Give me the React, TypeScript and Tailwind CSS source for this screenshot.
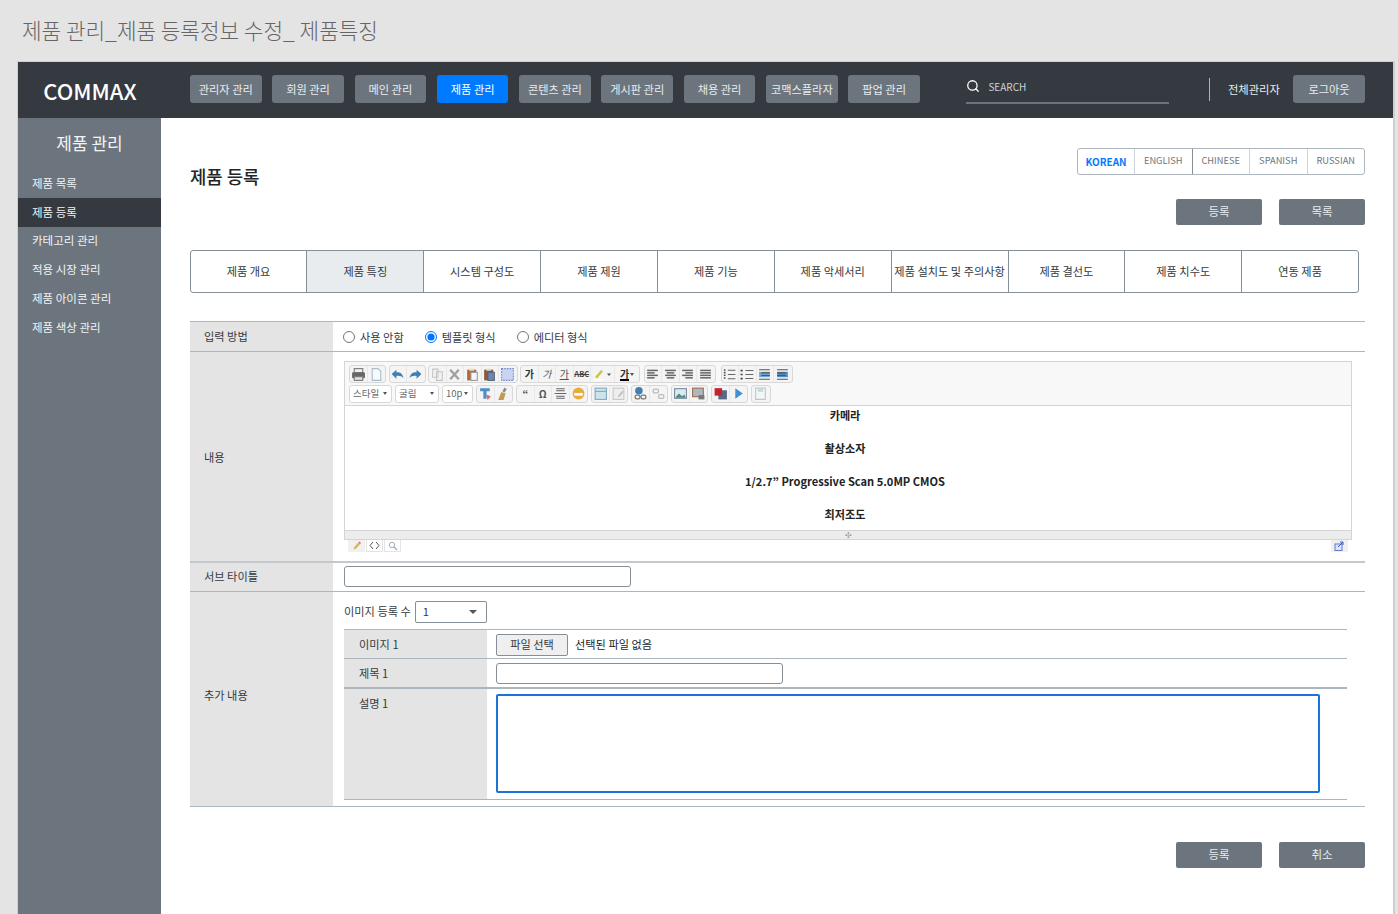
import React from 'react';
import { Search } from 'lucide-react';

const font = { fontFamily: '"Noto Sans CJK KR", "Noto Sans", sans-serif' };

const navItems = ['관리자 관리', '회원 관리', '메인 관리', '제품 관리', '콘텐츠 관리', '게시판 관리', '채용 관리', '코맥스플라자', '팝업 관리'];
const sideItems = ['제품 목록', '제품 등록', '카테고리 관리', '적용 시장 관리', '제품 아이콘 관리', '제품 색상 관리'];
const tabs = ['제품 개요', '제품 특징', '시스템 구성도', '제품 제원', '제품 기능', '제품 악세서리', '제품 설치도 및 주의사항', '제품 결선도', '제품 치수도', '연동 제품'];
const langs = ['KOREAN', 'ENGLISH', 'CHINESE', 'SPANISH', 'RUSSIAN'];

const Group = ({ children, className = '' }: { children: React.ReactNode; className?: string }) => (
  <div className={`flex h-[18px] shrink-0 items-center rounded-[3px] border border-[#d8d8d8] bg-[#f4f4f4] ${className}`}>{children}</div>
);

const Tool = ({ children, wide }: { children: React.ReactNode; wide?: boolean }) => (
  <div className={`flex h-full items-center justify-center border-r border-[#e8e8e8] last:border-r-0 ${wide ? 'w-[24px]' : 'w-[17.5px]'}`}>{children}</div>
);

const Ico = ({ children }: { children: React.ReactNode }) => (
  <svg width="15" height="15" viewBox="0 0 14 14" fill="none">{children}</svg>
);

const Lines = ({ rows }: { rows: [number, number][] }) => (
  <Ico>
    {rows.map(([x, w], i) => (
      <rect key={i} x={x} y={2.5 + i * 2.3} width={w} height="1.4" fill="#666" />
    ))}
  </Ico>
);

const Drop = ({ label, w }: { label: string; w: string }) => (
  <div className={`flex h-[18px] shrink-0 items-center justify-between rounded-[3px] border border-[#d8d8d8] bg-white pl-[3px] pr-[4px] text-[9.5px] text-[#666] ${w}`}>
    <span>{label}</span>
    <span className="h-0 w-0 border-x-[2.5px] border-t-[3px] border-x-transparent border-t-[#555]" />
  </div>
);

const Toolbar = () => (
  <div className="flex h-[44px] flex-col gap-[1.5px] border-b border-[#d4d4d4] bg-[#f8f8f8] pl-[4px] pt-[3px]">
    <div className="flex gap-[2.5px]">
      <Group>
        <Tool><Ico><rect x="3" y="1.5" width="8" height="4" fill="#eee" stroke="#777" /><rect x="1" y="5" width="12" height="5.5" rx="1" fill="#666" /><rect x="3" y="9" width="8" height="3.5" fill="#ddd" stroke="#777" /></Ico></Tool>
        <Tool><Ico><path d="M3 1.5h5.5L11 4v8.5H3z" fill="#f4fafd" stroke="#a9bfc9" /></Ico></Tool>
      </Group>
      <Group>
        <Tool><Ico><path d="M1.5 6.5L6 2.5V5c3.5-.5 6 1.5 6.5 5.5C11 8.5 9 8 6 8.3V11z" fill="#3f7fb5" /></Ico></Tool>
        <Tool><Ico><path d="M12.5 6.5L8 2.5V5c-3.5-.5-6 1.5-6.5 5.5C3 8.5 5 8 8 8.3V11z" fill="#3f7fb5" /></Ico></Tool>
      </Group>
      <Group>
        <Tool><Ico><path d="M2.5 2h5v7.5h-5zM6 4.5h5.5v8H6z" fill="#f3f3f3" stroke="#c4c4c4" /></Ico></Tool>
        <Tool><Ico><path d="M3 2.5l8 9M11 2.5l-8 9" stroke="#a0a0a0" strokeWidth="2.2" /></Ico></Tool>
        <Tool><Ico><rect x="2" y="2.5" width="8.5" height="10" fill="#b8682d" /><rect x="5.5" y="5" width="6" height="7.5" fill="#f6f6f6" stroke="#999" /><rect x="4" y="1.5" width="4.5" height="2" fill="#ddd" /></Ico></Tool>
        <Tool><Ico><rect x="2" y="2.5" width="8.5" height="10" fill="#8a5a35" /><rect x="5.5" y="5" width="6" height="7.5" fill="#6f86b8" stroke="#567" /><rect x="4" y="1.5" width="4.5" height="2" fill="#ddd" /></Ico></Tool>
        <Tool><Ico><rect x="1.5" y="1.5" width="11" height="11" fill="#c9d3f2" stroke="#6f86d6" strokeDasharray="1.5 1" /></Ico></Tool>
      </Group>
      <Group>
        <Tool><span className="text-[10px] font-bold leading-none text-[#333]">가</span></Tool>
        <Tool><span className="text-[10px] italic leading-none text-[#555]">가</span></Tool>
        <Tool><span className="text-[10px] leading-none text-[#555] underline">가</span></Tool>
        <Tool><span className="text-[7.5px] font-bold leading-none text-[#444] line-through">ABC</span></Tool>
        <Tool wide>
          <svg width="21" height="14" viewBox="0 0 21 14" fill="none"><path d="M3 10l6-7 2 1.5-6 7z" fill="#c9c93a" /><rect x="2" y="12" width="9" height="1.5" fill="#fff" /><path d="M15 6.5h4l-2 2.5z" fill="#555" /></svg>
        </Tool>
        <Tool wide>
          <div className="flex items-center gap-[1px]">
            <span className="border-b-[2px] border-black text-[10px] font-bold leading-[11px] text-[#333]">가</span>
            <span className="h-0 w-0 border-x-[2.5px] border-t-[3px] border-x-transparent border-t-[#555]" />
          </div>
        </Tool>
      </Group>
      <Group className="ml-[1px]">
        <Tool><Lines rows={[[2, 10], [2, 7], [2, 10], [2, 7]]} /></Tool>
        <Tool><Lines rows={[[2, 10], [3.5, 7], [2, 10], [3.5, 7]]} /></Tool>
        <Tool><Lines rows={[[2, 10], [5, 7], [2, 10], [5, 7]]} /></Tool>
        <Tool><Lines rows={[[2, 10], [2, 10], [2, 10], [2, 10]]} /></Tool>
      </Group>
      <Group className="ml-[2.5px]">
        <Tool><Ico><path d="M2.5 2v10" stroke="#555" strokeWidth="1.6" strokeDasharray="1.5 1" /><path d="M5.5 3h7M5.5 7h7M5.5 11h7" stroke="#666" /></Ico></Tool>
        <Tool><Ico><path d="M1.5 2.5v1.6M1.5 6.2v1.6M1.5 10v1.6" stroke="#444" strokeWidth="2" /><path d="M5 3.3h7.5M5 7h7.5M5 10.8h7.5" stroke="#666" /></Ico></Tool>
        <Tool><Ico><path d="M2 2.5h10M2 11.5h10" stroke="#555" /><rect x="2" y="4.5" width="10" height="5" fill="#6ea5d4" /><path d="M4 5.5h8M4 8h8" stroke="#555" /></Ico></Tool>
        <Tool><Ico><path d="M2 2.5h10M2 11.5h10" stroke="#555" /><rect x="2" y="4.5" width="10" height="5" fill="#4d8fc4" /><path d="M2 5.5h8M2 8h8" stroke="#555" /></Ico></Tool>
      </Group>
    </div>
    <div className="flex gap-[3px]">
      <Drop label="스타일" w="w-[43px]" />
      <Drop label="굴림" w="w-[44px]" />
      <Drop label="10p" w="w-[31px]" />
      <Group>
        <Tool><Ico><path d="M2 2h9v3H8v7H5V5H2z" fill="#4d8fc4" /><path d="M7.5 8l4.5 1.5L9 13z" fill="#d86a7a" /></Ico></Tool>
        <Tool><Ico><path d="M8 1.5L10 3 8 6 6 5z" fill="#8a8a8a" /><path d="M5 5.5l4 1.5-2 6H2z" fill="#c49a4c" /></Ico></Tool>
      </Group>
      <Group>
        <Tool><span className="text-[10px] font-bold leading-none text-[#444]">“</span></Tool>
        <Tool><span className="text-[10px] font-bold leading-none text-[#555]">Ω</span></Tool>
        <Tool><Ico><path d="M3 2.5h8M3 4.5h8M1.5 7h11M3 9.5h8M3 11.5h8" stroke="#666" /></Ico></Tool>
        <Tool><Ico><circle cx="7" cy="7" r="5.5" fill="#e6ad3c" /><rect x="3" y="6.5" width="8" height="2.5" fill="#fff" /></Ico></Tool>
      </Group>
      <Group>
        <Tool><Ico><rect x="2" y="2" width="10.5" height="10.5" fill="#cfe3ee" stroke="#7fa7bd" /><path d="M2 5h10.5" stroke="#7fa7bd" /></Ico></Tool>
        <Tool><Ico><rect x="2" y="2" width="10" height="10.5" fill="#eee" stroke="#c8c8c8" /><path d="M7 10l4-5" stroke="#bbb" strokeWidth="1.5" /></Ico></Tool>
      </Group>
      <Group>
        <Tool><Ico><circle cx="5.5" cy="4.5" r="3.5" fill="#3f7fb5" /><rect x="2" y="8.5" width="4.5" height="3.5" rx="1.5" stroke="#777" strokeWidth="1.2" /><rect x="7.5" y="8.5" width="4.5" height="3.5" rx="1.5" stroke="#777" strokeWidth="1.2" /></Ico></Tool>
        <Tool><Ico><rect x="2" y="3" width="5" height="3.5" rx="1.5" stroke="#bbb" strokeWidth="1.2" /><rect x="7" y="8" width="5" height="3.5" rx="1.5" stroke="#bbb" strokeWidth="1.2" /></Ico></Tool>
      </Group>
      <Group>
        <Tool><Ico><rect x="1.5" y="2.5" width="11" height="9" fill="#dbeaf2" stroke="#789" /><path d="M2 11l3.5-4 3 2.5 2-1.5 1.5 3z" fill="#4f8a7a" /></Ico></Tool>
        <Tool><Ico><rect x="1.5" y="2" width="10" height="8" fill="#a9b9c6" stroke="#a0694a" /><rect x="7" y="8.5" width="5.5" height="4" fill="#777" /></Ico></Tool>
      </Group>
      <Group>
        <Tool><Ico><rect x="5" y="4" width="8" height="8.5" fill="#556a8a" /><rect x="1.5" y="2" width="7" height="7" fill="#c8232c" /></Ico></Tool>
        <Tool><Ico><path d="M4 2l7 5-7 5z" fill="#3f8fd8" /></Ico></Tool>
      </Group>
      <Group>
        <Tool><Ico><path d="M2.5 2h9v10.5h-9z" fill="#f1f6f6" stroke="#b9c9c9" /><rect x="4.5" y="2" width="5" height="3.5" fill="#c9d9d9" /></Ico></Tool>
      </Group>
    </div>
  </div>
);

const App = () => {
  return (
    <div className="h-[914px] w-[1398px] overflow-hidden bg-[#e4e4e4]" style={font}>
      <div className="flex h-[61px] items-center pb-[2px] pl-[22px] text-[21.3px] font-light text-[#666]">
        <h1>제품 관리_제품 등록정보 수정_ 제품특징</h1>
      </div>

      <div className="ml-[17px] flex h-[853px] w-[1378px] flex-col border-l border-r-2 border-t border-[#cfcfcf] bg-white">
        <header className="flex h-[56px] shrink-0 items-center bg-[#343a40] pb-[2px] pr-[28px]">
          <div className="w-[143px] shrink-0 pl-[1px] pt-[3px] text-center text-[22px] font-medium text-white">COMMAX</div>
          <nav className="ml-[29px] flex shrink-0 gap-[10.8px]">
            {navItems.map((item) => (
              <button
                key={item}
                className={`h-[28px] w-[71.5px] whitespace-nowrap rounded-[3px] text-[11.2px] ${item === '제품 관리' ? 'bg-[#007bff] text-white' : 'bg-[#6c757d] text-[#e9ecef]'}`}
              >
                {item}
              </button>
            ))}
          </nav>
          <div className="ml-[46.5px] mt-[1px] flex h-[28px] w-[203px] shrink-0 items-center gap-[8px] border-b-2 border-[#6c757d] pb-[5px] text-[10px] text-[#ced4da]">
            <Search size={14} strokeWidth={2.2} className="text-white" />
            <span>SEARCH</span>
          </div>
          <div className="ml-[39.5px] h-[23px] w-px shrink-0 bg-[#adb5bd]" />
          <span className="ml-[18px] whitespace-nowrap text-[11.3px] text-[#e9ecef]">전체관리자</span>
          <button className="ml-auto h-[28px] w-[72px] shrink-0 rounded-[3px] bg-[#6c757d] text-[11.2px] text-[#e9ecef]">로그아웃</button>
        </header>

        <div className="flex min-h-0 flex-1">
          <aside className="w-[143px] shrink-0 bg-[#6c757d]">
            <h2 className="mb-[1px] flex h-[50px] items-center justify-center text-[17px] text-[#f1f3f5]">제품 관리</h2>
            <ul className="text-[11.5px] text-[#f1f3f5]">
              {sideItems.map((item) => (
                <li key={item} className={`flex h-[28.8px] items-center pl-[14px] ${item === '제품 등록' ? 'bg-[#343a40]' : ''}`}>
                  {item}
                </li>
              ))}
            </ul>
          </aside>

          <main className="min-w-0 flex-1 pl-[29px] pr-[28px]">
            <div className="flex h-[81px] items-start justify-between pt-[29.5px]">
              <h2 className="pt-[14px] text-[17.8px] font-medium leading-[28px] text-[#212529]">제품 등록</h2>
              <div className="flex h-[27px] overflow-hidden rounded-[3px] border border-[#adb5bd] text-[9.3px] text-[#6c757d]">
                {langs.map((lang, i) => (
                  <div
                    key={lang}
                    className={`flex items-center justify-center ${i > 0 ? 'w-[57.5px] border-l border-[#ced4da]' : 'w-[56px] text-[10px] font-bold text-[#007bff]'} ${i === 2 ? 'border-x-[#868e96]' : ''}`}
                  >
                    {lang}
                  </div>
                ))}
              </div>
            </div>

            <div className="flex justify-end gap-[17px]">
              <button className="h-[26px] w-[86px] rounded-[2px] bg-[#6c757d] text-[11.5px] text-[#e9ecef]">등록</button>
              <button className="h-[26px] w-[86px] rounded-[2px] bg-[#6c757d] text-[11.5px] text-[#e9ecef]">목록</button>
            </div>

            <div className="-ml-[0.4px] mt-[25px] flex h-[43px] w-[1169.4px] overflow-hidden rounded-[3px] border border-[#868e96] text-[11.2px] text-[#343a40]">
              {tabs.map((tab, i) => (
                <div
                  key={tab}
                  className={`flex flex-1 items-center justify-center whitespace-nowrap ${i > 0 ? 'border-l border-[#868e96]' : ''} ${i === 1 ? 'bg-[#e9ecef]' : ''}`}
                >
                  {tab}
                </div>
              ))}
            </div>

            <div className="mt-[28px] border-y border-[#adb5bd] text-[11.2px] text-[#343a40]">
              <div className="flex h-[30px] border-b border-[#adb5bd]">
                <div className="flex w-[143px] shrink-0 items-center bg-[#e4e4e4] pl-[14px]">입력 방법</div>
                <div className="flex items-center pl-[10px] pt-[1px]">
                  <label className="flex items-center gap-[5px]"><input type="radio" name="mode" className="m-0 h-[12px] w-[12px]" />사용 안함</label>
                  <label className="ml-[21px] flex items-center gap-[5px]"><input type="radio" name="mode" defaultChecked className="m-0 h-[12px] w-[12px]" />템플릿 형식</label>
                  <label className="ml-[21px] flex items-center gap-[5px]"><input type="radio" name="mode" className="m-0 h-[12px] w-[12px]" />에디터 형식</label>
                </div>
              </div>

              <div className="flex h-[211px] border-b-2 border-[#c4c8cc]">
                <div className="flex w-[143px] shrink-0 items-center bg-[#e4e4e4] pl-[14px] pt-[2px]">내용</div>
                <div className="min-w-0 flex-1 pl-[11px] pr-[13px] pt-[9px]">
                  <div className="border border-[#d4d4d4]">
                    <Toolbar />
                    <div className="h-[124px] overflow-hidden pr-[6px] text-center text-[11.1px] font-bold leading-[33px] text-[#222]">
                      <p className="-mt-[7px]">카메라</p>
                      <p>촬상소자</p>
                      <p>1/2.7” Progressive Scan 5.0MP CMOS</p>
                      <p>최저조도</p>
                    </div>
                    <div className="flex h-[9px] items-center justify-center border-t border-[#d4d4d4] bg-[#ececec] text-[8px] leading-none text-[#999]">✣</div>
                  </div>
                  <div className="flex justify-between pl-[4px] pr-[4px]">
                    <div className="flex gap-[1px]">
                      <div className="flex h-[12px] w-[17px] items-center justify-center bg-[#f0f0f0]">
                        <svg width="10" height="10" viewBox="0 0 10 10"><path d="M1.5 8.5l1-2.5 4-4.5 1.5 1.5-4 4.5z" fill="#d9b13c" /><path d="M6.5 1.5l1.5 1.5 1-1-1.5-1.5z" fill="#d66" /></svg>
                      </div>
                      <div className="flex h-[12px] w-[17px] items-center justify-center border border-t-0 border-[#e4e4e4]">
                        <svg width="11" height="9" viewBox="0 0 11 9" fill="none"><path d="M4 1L1 4.5 4 8M7 1l3 3.5L7 8" stroke="#555" /></svg>
                      </div>
                      <div className="flex h-[12px] w-[17px] items-center justify-center border border-t-0 border-[#e4e4e4]">
                        <svg width="10" height="10" viewBox="0 0 10 10" fill="none"><circle cx="4" cy="4" r="2.7" stroke="#9fb0c0" /><path d="M6 6l3 3" stroke="#9fb0c0" strokeWidth="1.4" /></svg>
                      </div>
                    </div>
                    <div className="flex h-[12px] w-[17px] items-center justify-center bg-[#f0f0f0]">
                      <svg width="11" height="10" viewBox="0 0 11 10" fill="none"><rect x="1" y="3" width="7" height="6.5" fill="#dfe6fb" stroke="#5f79c9" /><path d="M4 6l5-5M6 1h3v3" stroke="#3a5ac0" /></svg>
                    </div>
                  </div>
                </div>
              </div>

              <div className="flex h-[29px] border-b border-[#adb5bd]">
                <div className="flex w-[143px] shrink-0 items-center bg-[#e4e4e4] pb-[2px] pl-[14px]">서브 타이틀</div>
                <div className="flex items-center pb-[1px] pl-[11px]">
                  <input className="h-[21px] w-[286.5px] rounded-[3px] border border-[#868e96] bg-white" />
                </div>
              </div>

              <div className="flex h-[214px]">
                <div className="flex w-[143px] shrink-0 items-center bg-[#e4e4e4] pb-[7px] pl-[14px]">추가 내용</div>
                <div className="min-w-0 flex-1 pl-[11px] pr-[18px]">
                  <div className="flex h-[37px] items-center gap-[4px] pt-[2px]">
                    <span>이미지 등록 수</span>
                    <div className="flex h-[22px] w-[72px] items-center justify-between rounded-[2px] border border-[#868e96] pl-[7px] pr-[9px]">
                      <span>1</span>
                      <span className="h-0 w-0 border-x-[4px] border-t-[4px] border-x-transparent border-t-[#555]" />
                    </div>
                  </div>
                  <div className="border-b border-[#adb5bd]">
                    <div className="flex h-[29px] border-t border-[#adb5bd]">
                      <div className="flex w-[143px] shrink-0 items-center bg-[#e4e4e4] pl-[15px]">이미지 1</div>
                      <div className="flex items-center gap-[7px] pl-[9px] pt-[1px]">
                        <button className="h-[22px] w-[72px] rounded-[2px] border border-[#868e96] bg-[#efefef]">파일 선택</button>
                        <span className="text-[#212529]">선택된 파일 없음</span>
                      </div>
                    </div>
                    <div className="flex h-[29px] border-t border-[#adb5bd]">
                      <div className="flex w-[143px] shrink-0 items-center bg-[#e4e4e4] pl-[15px]">제목 1</div>
                      <div className="flex items-center pl-[9px]">
                        <input className="h-[21px] w-[287px] rounded-[3px] border border-[#868e96] bg-white" />
                      </div>
                    </div>
                    <div className="flex h-[112px] border-t-2 border-[#adb5bd]">
                      <div className="w-[143px] shrink-0 bg-[#e4e4e4] pl-[15px] pt-[6px]">설명 1</div>
                      <div className="min-w-0 flex-1 pl-[9px] pr-[27px] pt-[5px]">
                        <textarea className="block h-[99px] w-full resize-none rounded-[2px] border-2 border-[#1a73d9] bg-white" />
                      </div>
                    </div>
                  </div>
                </div>
              </div>
            </div>

            <div className="mt-[35px] flex justify-end gap-[17px]">
              <button className="h-[26px] w-[86px] rounded-[2px] bg-[#6c757d] text-[11.5px] text-[#e9ecef]">등록</button>
              <button className="h-[26px] w-[86px] rounded-[2px] bg-[#6c757d] text-[11.5px] text-[#e9ecef]">취소</button>
            </div>
          </main>
        </div>
      </div>
    </div>
  );
};

export default App;
